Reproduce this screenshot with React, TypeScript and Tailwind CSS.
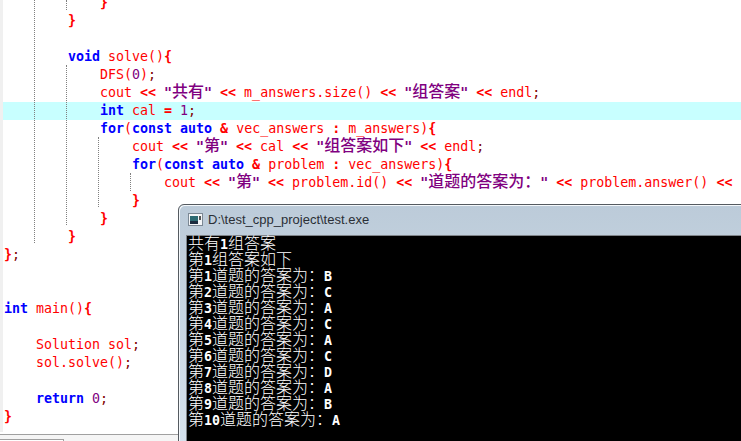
const mono = "font-['DejaVu_Sans_Mono','Liberation_Mono',monospace]";

// one piece of a code line: k keyword, i name, o operator, n number, s string, p semicolon
type Part = [string, string];

const styles: Record<string, string> = {
  k: 'text-[#0000ff] font-bold',
  i: 'text-[#ff0000]',
  o: 'text-[#ff0000] font-bold',
  n: 'text-[#800080]',
  s: 'text-[#800080] font-bold',
  p: 'text-[#800000]',
};

const cjk = /([\u3000-\u9fff\uff00-\uffef]+)/;

function Piece({ kind, text }: { kind: string; text: string }) {
  const bits = text.split(cjk);
  return (
    <span className={styles[kind]}>
      {bits.map((b, i) =>
        cjk.test(b) ? (
          <span key={i} className="font-['Noto_Sans_CJK_SC',sans-serif] text-[16px] font-medium leading-[0]">
            {b}
          </span>
        ) : (
          b
        ),
      )}
    </span>
  );
}

const lines: { indent: number; parts: Part[]; active?: boolean }[] = [
  { indent: 3, parts: [['o', '}']] },
  { indent: 2, parts: [['o', '}']] },
  { indent: 0, parts: [] },
  { indent: 2, parts: [['k', 'void'], ['i', ' solve()'], ['o', '{']] },
  { indent: 3, parts: [['i', 'DFS('], ['n', '0'], ['i', ')'], ['p', ';']] },
  {
    indent: 3,
    parts: [['i', 'cout '], ['o', '<<'], ['s', ' "共有" '], ['o', '<<'], ['i', ' m_answers.size() '], ['o', '<<'], ['s', ' "组答案" '], ['o', '<<'], ['i', ' endl'], ['p', ';']],
  },
  { indent: 3, active: true, parts: [['k', 'int'], ['i', ' cal '], ['o', '='], ['n', ' 1'], ['p', ';']] },
  {
    indent: 3,
    parts: [['k', 'for'], ['i', '('], ['k', 'const auto'], ['o', ' & '], ['i', 'vec_answers '], ['o', ':'], ['i', ' m_answers)'], ['o', '{']],
  },
  {
    indent: 4,
    parts: [['i', 'cout '], ['o', '<<'], ['s', ' "第" '], ['o', '<<'], ['i', ' cal '], ['o', '<<'], ['s', ' "组答案如下" '], ['o', '<<'], ['i', ' endl'], ['p', ';']],
  },
  {
    indent: 4,
    parts: [['k', 'for'], ['i', '('], ['k', 'const auto'], ['o', ' & '], ['i', 'problem '], ['o', ':'], ['i', ' vec_answers)'], ['o', '{']],
  },
  {
    indent: 5,
    parts: [['i', 'cout '], ['o', '<<'], ['s', ' "第" '], ['o', '<<'], ['i', ' problem.id() '], ['o', '<<'], ['s', ' "道题的答案为：" '], ['o', '<<'], ['i', ' problem.answer() '], ['o', '<<'], ['s', ' "']],
  },
  { indent: 4, parts: [['o', '}']] },
  { indent: 3, parts: [['o', '}']] },
  { indent: 2, parts: [['o', '}']] },
  { indent: 0, parts: [['o', '}'], ['p', ';']] },
  { indent: 0, parts: [] },
  { indent: 0, parts: [] },
  { indent: 0, parts: [['k', 'int'], ['i', ' main()'], ['o', '{']] },
  { indent: 0, parts: [] },
  { indent: 1, parts: [['i', 'Solution sol'], ['p', ';']] },
  { indent: 1, parts: [['i', 'sol.solve()'], ['p', ';']] },
  { indent: 0, parts: [] },
  { indent: 1, parts: [['k', 'return'], ['n', ' 0'], ['p', ';']] },
  { indent: 0, parts: [['o', '}']] },
];

const output = [
  '共有1组答案',
  '第1组答案如下',
  '第1道题的答案为：B',
  '第2道题的答案为：C',
  '第3道题的答案为：A',
  '第4道题的答案为：C',
  '第5道题的答案为：A',
  '第6道题的答案为：C',
  '第7道题的答案为：D',
  '第8道题的答案为：A',
  '第9道题的答案为：B',
  '第10道题的答案为：A',
];

function Guide({ x, top, height }: { x: string; top: string; height: string }) {
  return <div className={`absolute ${x} ${top} ${height} w-px border-l border-dotted border-[#808080]`} />;
}

function ConsoleLine({ text }: { text: string }) {
  const bits = text.split(cjk);
  return (
    <div className="h-4 leading-4 whitespace-pre">
      {bits.map((b, i) =>
        cjk.test(b) ? (
          <span key={i} className="font-['Noto_Sans_CJK_SC',sans-serif] text-[16px] font-light leading-[0]">
            {b}
          </span>
        ) : (
          <span key={i} className="font-bold">
            {b}
          </span>
        ),
      )}
    </div>
  );
}

export default function App() {
  return (
    <div className="relative w-[741px] h-[441px] overflow-hidden bg-white">
      <div className="flex h-[434px]">
        <div className="w-[3px] h-[432px] shrink-0 bg-[#f0f0f0]" />
        <div className={`flex-1 min-w-0 -mt-[6px] ${mono} text-[13.3px]`}>
          {lines.map((line, i) => (
            <div
              key={i}
              className={`h-[18px] leading-[18px] whitespace-pre flex pl-px ${line.active ? 'bg-[#c8ffff]' : ''}`}
            >
              <span style={{ width: line.indent * 32 }} className="shrink-0" />
              <span>
                {line.parts.map((p, j) => (
                  <Piece key={j} kind={p[0]} text={p[1]} />
                ))}
              </span>
            </div>
          ))}
        </div>
      </div>

      {/* tab strip along the bottom */}
      <div className="h-[7px] border-t border-[#a0a0a0] bg-[#f5f5f5] flex items-end">
        <div className="h-[2px] w-[64px] border-t border-r border-[#a0a0a0] bg-white" />
      </div>

      <Guide x="left-[34px]" top="top-0" height="h-[243px]" />
      <Guide x="left-[66px]" top="top-0" height="h-[10px]" />
      <Guide x="left-[66px]" top="top-[65px]" height="h-[160px]" />
      <Guide x="left-[98px]" top="top-[137px]" height="h-[70px]" />
      <Guide x="left-[130px]" top="top-[173px]" height="h-[18px]" />

      {/* console window on top of the editor */}
      <div className="absolute left-[178px] top-[204px] w-[580px] h-[250px] rounded-tl-[6px] border border-[#555a60] shadow-[inset_1px_1px_0_#f4f8fb] bg-gradient-to-b from-[#bccbd9] to-[#d6e3ef] flex flex-col">
        <div className="h-[30px] shrink-0 flex items-center gap-[5px] pl-[9px] pb-[1px]">
          <svg width="15" height="13" viewBox="0 0 15 13">
            <rect x="0.5" y="0.5" width="14" height="12" fill="#f4f6f8" stroke="#7c8894" />
            <rect x="2" y="3" width="8" height="8" fill="#2c6a72" />
            <rect x="2" y="8" width="8" height="3" fill="#1c2c40" />
            <rect x="11" y="3" width="2" height="4" fill="#555" />
          </svg>
          <span className="font-['Liberation_Sans',sans-serif] text-[13px] text-[#2a2f36] leading-none">
            D:\test_cpp_project\test.exe
          </span>
        </div>
        <div className="ml-[7px] flex-1 border-t border-l border-[#7f8489] bg-black pl-px pt-px text-white font-['DejaVu_Sans_Mono',monospace] text-[13.3px]">
          {output.map((line, i) => (
            <ConsoleLine key={i} text={line} />
          ))}
        </div>
      </div>
    </div>
  );
}
